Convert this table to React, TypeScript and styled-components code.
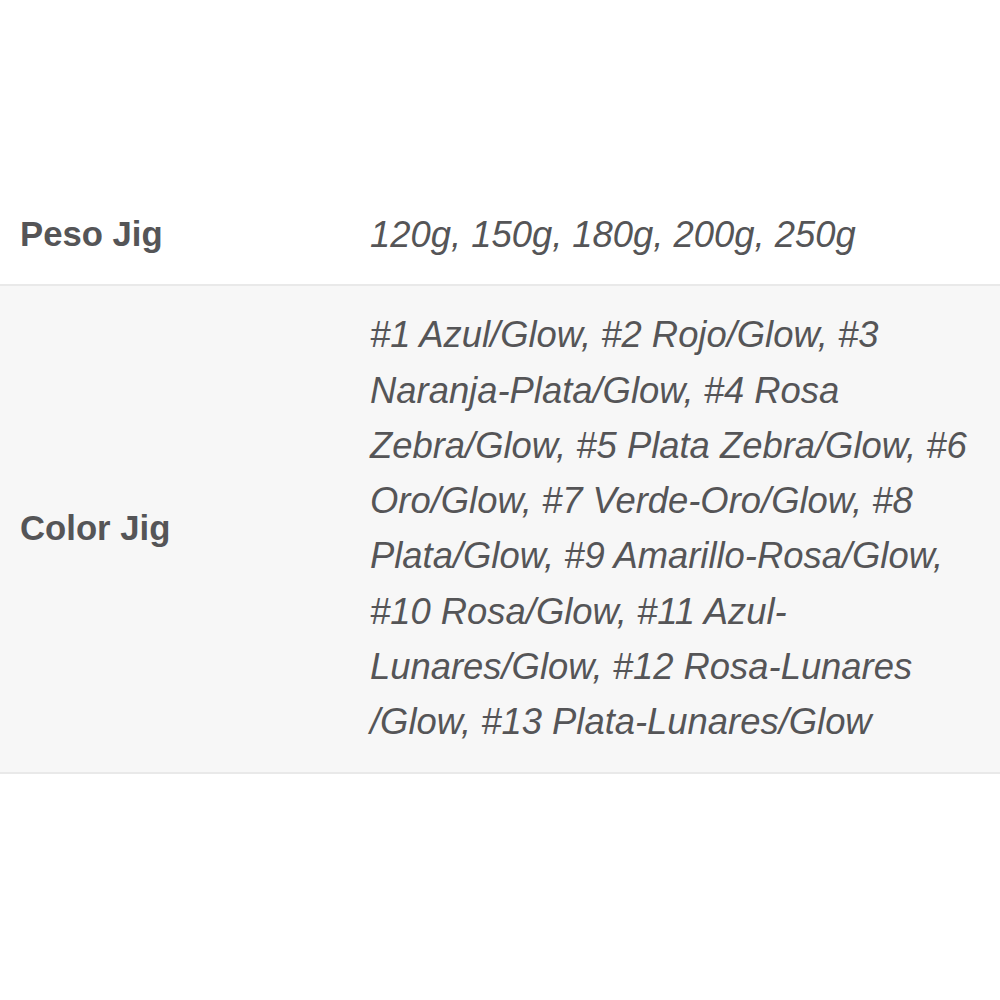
import React from "react";
import styled, { createGlobalStyle } from "styled-components";

const Global = createGlobalStyle`
  html, body { margin: 0; padding: 0; background: #ffffff; }
  body { font-family: "Liberation Sans", Arial, sans-serif; }
`;

const Page = styled.div`
  width: 1000px;
  height: 1000px;
  padding-top: 186px;
  box-sizing: border-box;
  background: #ffffff;
`;

const Table = styled.div`
  display: flex;
  flex-direction: column;
  width: 1000px;
`;

const Row = styled.div<{ $shade?: boolean }>`
  display: grid;
  grid-template-columns: 350px 620px;
  align-items: center;
  padding: 21px 0 22px 20px;
  background: ${(p) => (p.$shade ? "#f7f7f7" : "#ffffff")};
  border-bottom: 2px solid #e9e9e9;
`;

const Label = styled.div`
  font-family: "Liberation Sans", Arial, sans-serif;
  font-weight: 700;
  font-size: 34.7px;
  line-height: 55px;
  color: #555557;
`;

const Value = styled.div`
  font-family: "Liberation Sans", Arial, sans-serif;
  font-style: italic;
  font-weight: 400;
  font-size: 36.4px;
  line-height: 55.3px;
  color: #555557;
`;

export default function App() {
  return (
    <>
      <Global />
      <Page>
        <Table>
          <Row>
            <Label>Peso Jig</Label>
            <Value>120g, 150g, 180g, 200g, 250g</Value>
          </Row>
          <Row $shade>
            <Label>Color Jig</Label>
            <Value>
              #1 Azul/Glow, #2 Rojo/Glow, #3 Naranja-Plata/Glow, #4 Rosa
              Zebra/Glow, #5 Plata Zebra/Glow, #6 Oro/Glow, #7 Verde-Oro/Glow,
              #8 Plata/Glow, #9 Amarillo-Rosa/Glow, #10 Rosa/Glow, #11
              Azul-Lunares/Glow, #12 Rosa-Lunares /Glow, #13 Plata-Lunares/Glow
            </Value>
          </Row>
        </Table>
      </Page>
    </>
  );
}
